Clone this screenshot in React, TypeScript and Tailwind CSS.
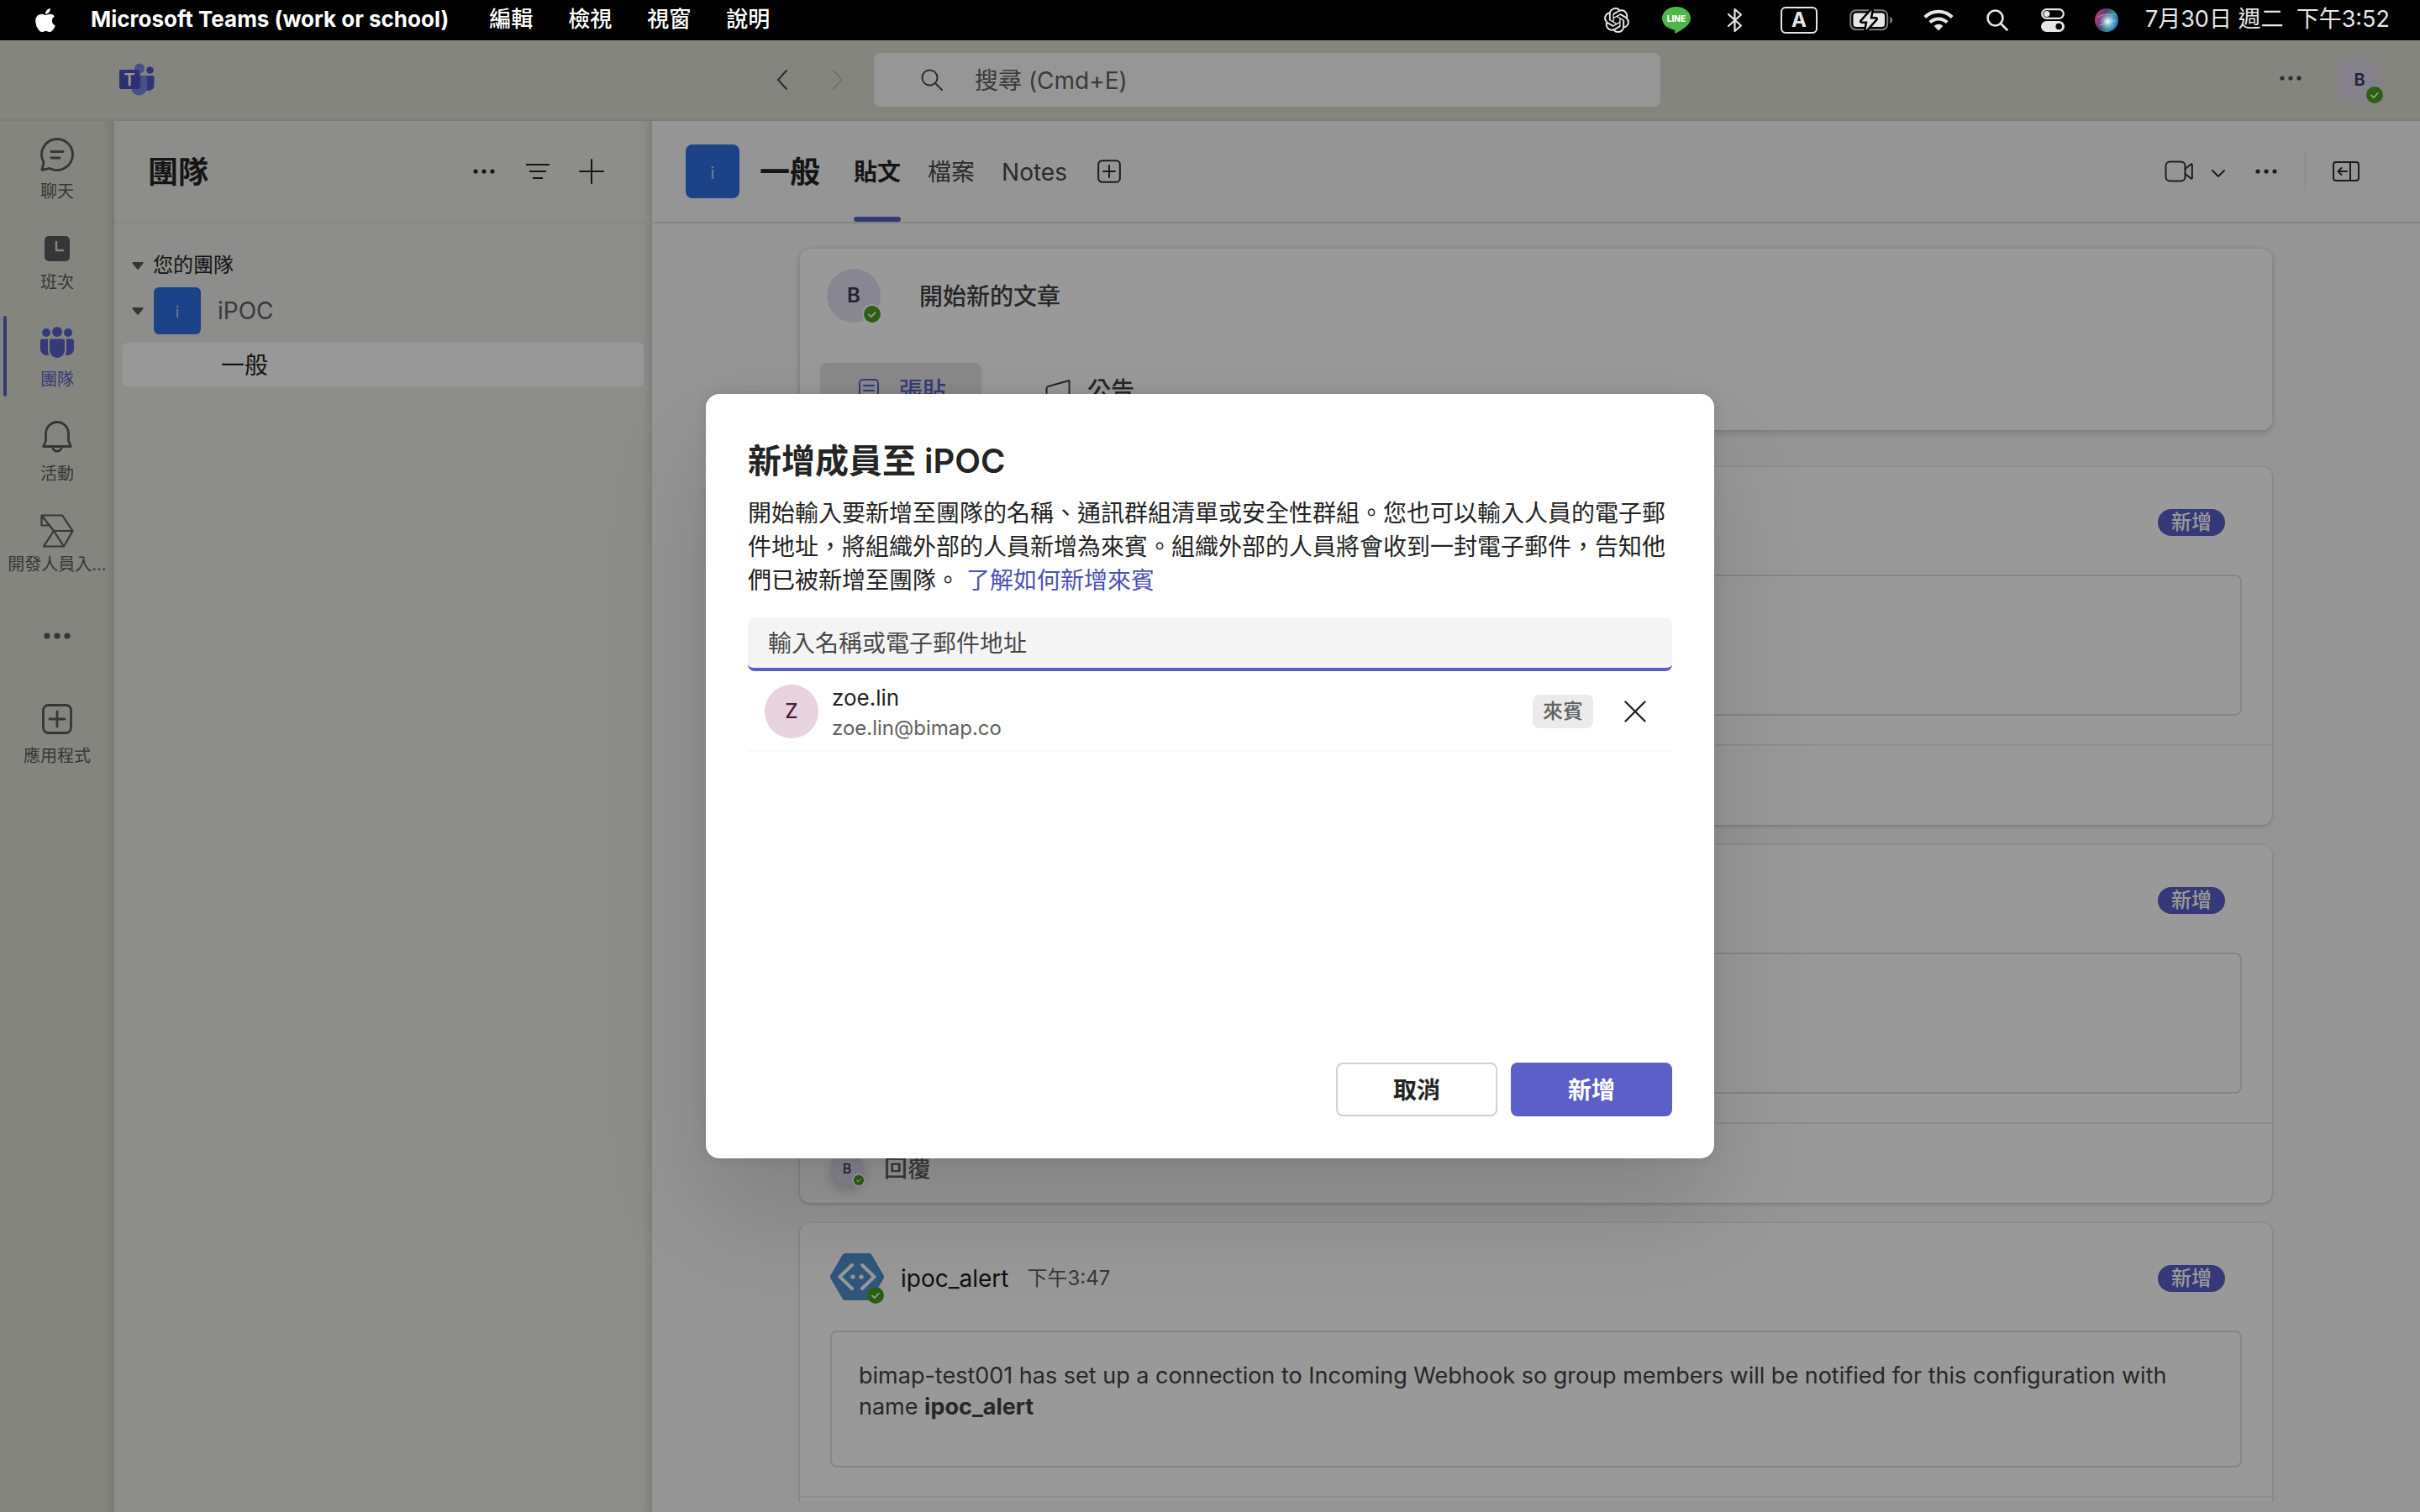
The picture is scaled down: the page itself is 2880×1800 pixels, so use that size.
import type { ReactNode } from "react";
import { FaApple } from "react-icons/fa";
import { SiOpenai } from "react-icons/si";

const svgBase = { fill: "none", stroke: "currentColor", strokeLinecap: "round", strokeLinejoin: "round" } as const;

function Dots({ large = false }: { large?: boolean }) {
  return large ? (
    <svg width="32" height="8" viewBox="0 0 32 8" fill="currentColor" aria-hidden="true">
      <circle cx="4" cy="4" r="3.6" />
      <circle cx="16" cy="4" r="3.6" />
      <circle cx="28" cy="4" r="3.6" />
    </svg>
  ) : (
    <svg width="26" height="6" viewBox="0 0 26 6" fill="currentColor" aria-hidden="true">
      <circle cx="3" cy="3" r="2.6" />
      <circle cx="13" cy="3" r="2.6" />
      <circle cx="23" cy="3" r="2.6" />
    </svg>
  );
}

function TeamsLogo() {
  return (
    <svg width="42" height="40" viewBox="0 0 42 40" aria-label="Microsoft Teams" role="img">
      <circle cx="36.5" cy="8.5" r="4.3" fill="#5059c9" />
      <path d="M28 15h11.5a2 2 0 0 1 2 2v9a6.5 6.5 0 0 1-13 1z" fill="#5059c9" />
      <circle cx="24" cy="6.4" r="6" fill="#7b83eb" />
      <path d="M14 15h17.5a1.6 1.6 0 0 1 1.6 1.6V29a9.5 9.5 0 0 1-19 0z" fill="#7b83eb" />
      <path d="M14 12h11.5v15a3 3 0 0 1-3 3H14z" fill="#000" opacity=".25" />
      <rect x="0" y="8" width="24" height="23" rx="2" fill="#4b53bc" />
      <text x="12" y="27" textAnchor="middle" fontFamily="Inter, sans-serif" fontWeight="600" fontSize="20" fill="#fff">T</text>
    </svg>
  );
}

function Presence({ size, ring }: { size: "sm" | "md"; ring?: string }) {
  return (
    <span className={`absolute bottom-0 right-0 rounded-full ${ring ?? ""} ${size === "sm" ? "size-3" : "size-5"}`}>
      <svg viewBox="0 0 20 20" className="size-full" aria-hidden="true">
        <circle cx="10" cy="10" r="10" fill="#46a01c" />
        <path d="M6 10.3l2.8 2.8 5-5.2" {...svgBase} stroke="#fff" strokeWidth="1.8" />
      </svg>
    </span>
  );
}

function PlusBox({ size, stroke }: { size: number; stroke: number }) {
  return (
    <svg width={size} height={size} viewBox="0 0 36 36" {...svgBase} strokeWidth={stroke} aria-hidden="true">
      <rect x="1.5" y="1.5" width="33" height="33" rx="6" />
      <path d="M18 9v18M9 18h18" />
    </svg>
  );
}

function ChatIcon() {
  return (
    <svg width="40" height="40" viewBox="0 0 40 40" {...svgBase} strokeWidth="2.8" aria-hidden="true">
      <path d="M20 1.5a18.5 18.5 0 1 1-8.6 34.9L2 38.3l2-9.2A18.5 18.5 0 0 1 20 1.5z" />
      <path d="M13 16.5h14M13 24h10" />
    </svg>
  );
}

function ShiftsIcon() {
  return (
    <svg width="30" height="30" viewBox="0 0 30 30" aria-hidden="true">
      <rect width="30" height="30" rx="5" fill="currentColor" />
      <path d="M14 7v10h8" fill="none" stroke="#dcded4" strokeWidth="2.4" strokeLinecap="round" />
    </svg>
  );
}

function PeopleIcon() {
  return (
    <svg width="40" height="38" viewBox="0 0 40 38" fill="currentColor" aria-hidden="true">
      <circle cx="20" cy="6" r="6" />
      <circle cx="7" cy="7" r="5" />
      <circle cx="33" cy="7" r="5" />
      <path d="M11 17a2.5 2.5 0 0 1 2.500-2.500h13A2.500 2.500 0 0 1 29 17v11a9 9 0 0 1-18 0z" />
      <path d="M9.500 14.500H2.500A2.500 2.500 0 0 0 0 17v9.500a7.500 7.500 0 0 0 10.300 6.900A11 11 0 0 1 9 28V17c0-.9.2-1.800.5-2.500zM30.500 14.500h7A2.500 2.500 0 0 1 40 17v9.500a7.500 7.500 0 0 1-10.300 6.900A11 11 0 0 0 31 28V17c0-.9-.2-1.800-.5-2.500z" />
    </svg>
  );
}

function BellIcon() {
  return (
    <svg width="36" height="38" viewBox="0 0 36 38" {...svgBase} strokeWidth="2.800" aria-hidden="true">
      <path d="M18 1.500A13.500 13.500 0 0 0 4.500 15v8.500L1.700 30.500h32.600l-2.800-7V15A13.500 13.500 0 0 0 18 1.500z" />
      <path d="M12.800 31a5.200 5.200 0 0 0 10.400 0" />
    </svg>
  );
}

function DeveloperIcon() {
  return (
    <svg width="40" height="40" viewBox="0 0 40 40" {...svgBase} strokeWidth="2.200" aria-hidden="true">
      <path d="M1.500 1.500H26L38.500 20 28 38.500H4L16 20 1.500 1.500zM1.500 1.500V13.500H11M16 20h22.500M16 20l12 18.500" />
    </svg>
  );
}

function RailItem({ icon, label, active, app }: { icon: ReactNode; label: string; active?: boolean; app?: boolean }) {
  return (
    <button
      className={`relative flex h-[112px] w-full flex-col items-center pt-5 text-xl leading-6 ${active ? "text-[#5b5fc7]" : "text-[#5c5c5c]"}`}
    >
      {active && <span className="absolute bottom-2 left-1 top-2 w-1 rounded-full bg-[#5b5fc7]" />}
      <span className={`flex h-10 items-center ${active ? "" : "text-[#5a5a5a]"}`}>{icon}</span>
      <span className={`whitespace-nowrap text-center ${app ? "mt-2" : "mt-3"}`}>{label}</span>
    </button>
  );
}

function MenuBar() {
  return (
    <header className="flex h-12 shrink-0 items-center bg-black pl-[38px] pr-9 text-[26px] leading-8 text-white">
      <FaApple className="mr-[38px] size-8 shrink-0" />
      <nav className="flex items-center gap-[42px] pb-0.5 font-medium">
        <span className="mr-1.5 font-bold">Microsoft Teams (work or school)</span>
        <span>編輯</span>
        <span>檢視</span>
        <span>視窗</span>
        <span>說明</span>
      </nav>
      <div className="ml-auto flex items-center text-[#e6e6e6]">
        <SiOpenai className="mr-[38px] size-[30px]" />
        <svg width="36" height="34" viewBox="0 0 36 34" className="mr-[42px]" aria-label="LINE">
          <path d="M18 1C8.500 1 1 7.200 1 14.800c0 6.800 6 12.400 14.200 13.600 1.200.3 1.300 1.500 1 4.600C24 29 35 23.500 35 14.800 35 7.200 27.500 1 18 1z" fill="#4db749" />
          <text x="18" y="19" textAnchor="middle" fontFamily="Inter, sans-serif" fontWeight="800" fontSize="10" fill="#fff">LINE</text>
        </svg>
        <svg width="20" height="30" viewBox="0 0 20 30" className="mr-[44px]" {...svgBase} strokeWidth="2.200" aria-label="Bluetooth">
          <path d="M2 8l15 13.500L9.500 28V2L17 8.500 2 22" />
        </svg>
        <span className="mr-[38px] flex h-8 w-11 items-center justify-center rounded-md border-2 border-[#e6e6e6] text-2xl font-bold">A</span>
        <svg width="52" height="26" viewBox="0 0 52 26" className="mr-[36px]" aria-label="Battery charging">
          <rect x="1.200" y="1.200" width="44" height="23" rx="6.500" fill="none" stroke="#7a7a7a" strokeWidth="2" />
          <rect x="4.500" y="4.500" width="37.500" height="16.500" rx="3.500" fill="#e6e6e6" />
          <path d="M48.200 9v8c2-.6 3-2.200 3-4s-1-3.400-3-4z" fill="#7a7a7a" />
          <path d="M26.500 1L14.500 14.500h7L19.500 25l12-13.500h-7z" fill="#e6e6e6" stroke="#000" strokeWidth="5" strokeLinejoin="round" paintOrder="stroke" />
        </svg>
        <svg width="36" height="26" viewBox="0 0 36 26" className="mr-[38px]" fill="none" stroke="currentColor" strokeWidth="4" aria-label="Wi-Fi">
          <path d="M1.800 9.500a23 23 0 0 1 32.400 0M7.800 15.700a14.500 14.500 0 0 1 20.400 0" />
          <path d="M18 25.500l-5.300-5.600a7.500 7.500 0 0 1 10.600 0z" fill="currentColor" stroke="none" />
        </svg>
        <svg width="28" height="28" viewBox="0 0 28 28" className="mr-[38px]" {...svgBase} strokeWidth="2.600" aria-label="Search">
          <circle cx="11.500" cy="11.500" r="9" />
          <path d="M18.500 18.500l7 7" />
        </svg>
        <svg width="28" height="28" viewBox="0 0 28 28" className="mr-[36px]" aria-label="Control Center">
          <rect x="1.200" y="1.200" width="25.600" height="10.600" rx="5.300" fill="none" stroke="#e6e6e6" strokeWidth="2.200" />
          <circle cx="6.800" cy="6.500" r="3.600" fill="#e6e6e6" />
          <rect x="0" y="15" width="28" height="13" rx="6.500" fill="#e6e6e6" />
          <circle cx="21.200" cy="21.500" r="3.800" fill="#000" />
        </svg>
        <svg width="28" height="28" viewBox="0 0 28 28" className="mr-8" aria-label="Siri">
          <defs>
            <linearGradient id="siri" x1="0" y1="0.300" x2="1" y2="0.700">
              <stop offset="0" stopColor="#c93a6b" />
              <stop offset="0.350" stopColor="#5b3a78" />
              <stop offset="0.650" stopColor="#2f8f93" />
              <stop offset="1" stopColor="#2c6fd0" />
            </linearGradient>
            <radialGradient id="siriGlow" cx="0.550" cy="0.550" r="0.400">
              <stop offset="0" stopColor="#fff" />
              <stop offset="1" stopColor="#9fd8ff" stopOpacity="0" />
            </radialGradient>
          </defs>
          <circle cx="14" cy="14" r="14" fill="url(#siri)" />
          <circle cx="14" cy="14" r="14" fill="url(#siriGlow)" />
          <path d="M3 11c6-5 12-3 22-4M5 20c6 0 10-6 20-5" stroke="#bfe9e8" strokeWidth="1" opacity=".5" fill="none" />
        </svg>
        <time className="whitespace-pre pb-0.5 text-[27px]">7月30日 週二  下午3:52</time>
      </div>
    </header>
  );
}

function TitleBar() {
  return (
    <div className="flex h-24 shrink-0 items-center border-b-2 border-[#d0d1c8] bg-[#dcded4] pr-[44px] text-[#4a4a4a]">
      <div className="flex w-[1040px] items-center justify-between pl-[142px] pr-[10px]">
        <TeamsLogo />
        <div className="flex">
          <button aria-label="上一頁" className="flex h-16 w-[66px] items-center justify-center">
            <svg width="14" height="24" viewBox="0 0 14 24" {...svgBase} strokeWidth="2"><path d="M12 1L2 12l10 11" /></svg>
          </button>
          <button aria-label="下一頁" disabled className="flex h-16 w-[66px] items-center justify-center text-[#bfc0b8]">
            <svg width="14" height="24" viewBox="0 0 14 24" {...svgBase} strokeWidth="2"><path d="M2 1l10 11L2 23" /></svg>
          </button>
        </div>
      </div>
      <label className="flex h-16 w-[936px] items-center rounded-lg bg-[#fafafa] pl-[56px]">
        <svg width="26" height="26" viewBox="0 0 26 26" {...svgBase} strokeWidth="2" className="mr-[38px] shrink-0" aria-hidden="true">
          <circle cx="10.500" cy="10.500" r="9" />
          <path d="M17 17l8 8" />
        </svg>
        <input
          type="search"
          aria-label="搜尋"
          placeholder="搜尋 (Cmd+E)"
          className="h-full flex-1 bg-transparent pt-0.5 text-[28px] outline-none placeholder:text-[#616161]"
        />
      </label>
      <div className="ml-auto flex items-center gap-[22px]">
        <button aria-label="設定及其他" className="flex size-16 items-center justify-center pb-1">
          <Dots />
        </button>
        <button aria-label="個人檔案" className="relative flex size-14 items-center justify-center rounded-full bg-[#dcd7e6] text-xl font-semibold text-[#3f3a5c]">
          B
          <Presence size="md" />
        </button>
      </div>
    </div>
  );
}

function Rail() {
  return (
    <nav className="w-[136px] shrink-0 bg-[#dcded4] shadow-[inset_-16px_0_12px_-12px_rgba(0,0,0,0.12)]">
      <RailItem icon={<ChatIcon />} label="聊天" />
      <RailItem icon={<ShiftsIcon />} label="班次" app />
      <RailItem icon={<PeopleIcon />} label="團隊" active />
      <RailItem icon={<BellIcon />} label="活動" />
      <RailItem icon={<DeveloperIcon />} label="開發人員入..." app />
      <button aria-label="檢視更多應用程式" className="mb-2 flex h-[104px] w-full items-center justify-center pt-0.5 text-[#5a5a5a]">
        <Dots large />
      </button>
      <RailItem icon={<PlusBox size={36} stroke={2.8} />} label="應用程式" />
    </nav>
  );
}

function Caret() {
  return (
    <svg width="14" height="9" viewBox="0 0 14 9" fill="#5a5a5a" aria-hidden="true">
      <path d="M1.500 0h11a1 1 0 0 1 .8 1.700L8 8.200a1.300 1.300 0 0 1-2 0L.7 1.700A1 1 0 0 1 1.500 0z" />
    </svg>
  );
}

function TeamPanel() {
  return (
    <aside className="flex w-[640px] shrink-0 flex-col bg-[#ebebe8] shadow-[inset_-16px_0_12px_-12px_rgba(0,0,0,0.12)]">
      <div className="flex h-[122px] items-center border-b-2 border-[#dededb] px-10 text-[#242424]">
        <h2 className="mr-auto pt-0.5 text-4xl font-bold">團隊</h2>
        <button aria-label="更多選項" className="flex size-16 items-center justify-center"><Dots /></button>
        <button aria-label="篩選" className="flex size-16 items-center justify-center">
          <svg width="28" height="18" viewBox="0 0 28 18" {...svgBase} strokeLinecap="butt" strokeWidth="2"><path d="M0 1h28M4 9h20M8 17h12" /></svg>
        </button>
        <button aria-label="建立或加入團隊" className="flex size-16 items-center justify-center">
          <svg width="30" height="30" viewBox="0 0 30 30" {...svgBase} strokeWidth="2"><path d="M15 1v28M1 15h28" /></svg>
        </button>
      </div>
      <div className="px-[10px] pt-8">
        <button className="flex h-9 items-center gap-[11px] pl-[11px] text-2xl text-[#242424]">
          <Caret />
          您的團隊
        </button>
        <button className="mt-2 flex h-14 items-center pl-[11px] text-[28px] text-[#616161]">
          <Caret />
          <span className="ml-3 mr-5 flex size-14 items-center justify-center rounded-md bg-[#2f71e1] pt-1 text-lg text-white/70">i</span>
          iPOC
        </button>
        <button className="mt-2.5 flex h-[52px] w-full items-center rounded-md bg-[#fdfdfd] pl-[117px] pt-0.5 text-[28px] text-[#242424]">一般</button>
      </div>
    </aside>
  );
}

function ChannelHeader() {
  const tab = "relative flex h-full items-center px-4 pt-0.5 text-[28px] text-[#484848]";
  return (
    <div className="flex h-[122px] shrink-0 items-center border-b-2 border-[#dedede] pl-10 pr-[72px] text-[#303030]">
      <span className="flex size-16 items-center justify-center rounded-lg bg-[#2f71e1] pt-1 text-xl text-white/70">i</span>
      <h1 className="ml-6 mr-6 pt-0.5 text-4xl font-bold text-[#242424]">一般</h1>
      <div role="tablist" className="flex h-full">
        <button role="tab" aria-selected="true" className="relative flex h-full items-center px-4 pt-0.5 text-[28px] font-bold text-[#242424]">
          貼文
          <span className="absolute inset-x-4 bottom-0 h-1.5 rounded-full bg-[#5b5fc7]" />
        </button>
        <button role="tab" className={tab}>檔案</button>
        <button role="tab" className={tab}>Notes</button>
      </div>
      <button aria-label="新增索引標籤" className="ml-5"><PlusBox size={28} stroke={2.6} /></button>
      <div className="ml-auto flex items-center">
        <button aria-label="立即開會">
          <svg width="34" height="26" viewBox="0 0 34 26" {...svgBase} strokeWidth="2">
            <rect x="1.500" y="1.500" width="23" height="23" rx="5" />
            <path d="M24.500 10l7-5.500a.8.800 0 0 1 1.300.6v15.800a.8.800 0 0 1-1.300.6l-7-5.500" />
          </svg>
        </button>
        <button aria-label="會議選項" className="ml-[22px] mt-1">
          <svg width="16" height="9" viewBox="0 0 16 9" {...svgBase} strokeWidth="2"><path d="M1 1l7 7 7-7" /></svg>
        </button>
        <button aria-label="更多選項" className="ml-9"><Dots /></button>
        <span className="mx-8 h-12 w-0.5 bg-[#efefef]" />
        <button aria-label="開啟頻道詳細資料">
          <svg width="32" height="24" viewBox="0 0 32 24" {...svgBase} strokeWidth="2">
            <rect x="1" y="1" width="30" height="22" rx="3" />
            <path d="M21 1v22M17 12H7M10.500 8L6.500 12l4 4" />
          </svg>
        </button>
      </div>
    </div>
  );
}

function Composer() {
  return (
    <section className="flex h-[216px] flex-col justify-between rounded-xl bg-white p-6 pb-4 shadow-[0_4px_8px_rgba(0,0,0,0.14),0_0_4px_rgba(0,0,0,0.12)]">
      <div className="flex items-center pl-2">
        <span className="relative flex size-16 items-center justify-center rounded-full bg-[#e3dff0] text-2xl font-semibold text-[#3f3a5c]">
          B
          <Presence size="md" ring="ring-2 ring-white" />
        </span>
        <button className="ml-[46px] pt-0.5 text-[28px] font-medium text-[#424242]">開始新的文章</button>
      </div>
      <div className="flex h-16 text-[28px] font-medium">
        <button className="flex w-48 items-center justify-center gap-6 rounded-lg bg-[#e4e4e4] pl-1 pt-0.5 text-[#5b5fc7]">
          <svg width="24" height="28" viewBox="0 0 24 28" {...svgBase} strokeWidth="2" aria-hidden="true">
            <rect x="1" y="1" width="22" height="26" rx="4" />
            <path d="M6 8h12M6 14h12M6 20h7" />
          </svg>
          張貼
        </button>
        <button className="ml-[76px] flex items-center gap-5 pt-0.5 text-[#424242]">
          <svg width="30" height="28" viewBox="0 0 30 28" {...svgBase} strokeWidth="2" aria-hidden="true">
            <path d="M28.500 2v23L8 20H4a2.500 2.500 0 0 1-2.500-2.500v-6A3 3 0 0 1 3.500 9z" />
            <path d="M8 20a5 5 0 0 0 9.500 2.500" />
          </svg>
          公告
        </button>
      </div>
    </section>
  );
}

function BotAvatar() {
  return (
    <span className="relative flex size-16 items-center">
      <svg width="64" height="56" viewBox="0 0 64 56" aria-hidden="true">
        <path d="M18 0h28a4 4 0 0 1 3.500 2l14 24a4 4 0 0 1 0 4l-14 24a4 4 0 0 1-3.500 2H18a4 4 0 0 1-3.500-2L.5 30a4 4 0 0 1 0-4l14-24A4 4 0 0 1 18 0z" fill="#5292d0" />
        <path d="M26 14L11.500 28 26 42M38 14l14.500 14L38 42" fill="none" stroke="#fff" strokeWidth="4" strokeLinecap="round" strokeLinejoin="round" />
        <circle cx="27" cy="28" r="2.600" fill="#fff" />
        <circle cx="37" cy="28" r="2.600" fill="#fff" />
      </svg>
      <Presence size="md" />
    </span>
  );
}

function ReplyRow() {
  return (
    <>
      <span className="relative flex size-10 items-center justify-center rounded-full bg-[#e3dff0] text-base font-medium text-[#3f3a5c] shadow-[0_6px_14px_rgba(0,0,0,0.2)]">
        B
        <Presence size="sm" ring="ring-2 ring-white" />
      </span>
      <button className="ml-6 text-[28px] font-medium text-[#616161]">回覆</button>
    </>
  );
}

function Post({ author, time, children }: { author?: string; time?: string; children?: ReactNode }) {
  return (
    <article className="mt-6 rounded-xl bg-white shadow-[0_2px_4px_rgba(0,0,0,0.14),0_0_4px_rgba(0,0,0,0.12)]">
      <div className="flex h-32 items-center pl-9 pr-14">
        <BotAvatar />
        {author && <span className="ml-5 pt-1 text-[28px] text-[#1c1c1c]">{author}</span>}
        {time && <time className="ml-[22px] pt-1 text-2xl text-[#616161]">{time}</time>}
        <span className="ml-auto mt-1 flex h-8 w-20 items-center justify-center rounded-full bg-[#5b5fc7] text-2xl font-medium text-white">新增</span>
      </div>
      <div className={`mx-9 mb-[34px] rounded-lg border-2 border-[#dedede] px-8 pb-8 pt-[33px] text-[27px] leading-[37px] text-[#424242] ${children ? "min-h-[163px]" : "min-h-[168px]"}`}>
        {children}
      </div>
      <div className="flex h-24 items-center border-t-2 border-[#ebebeb] pl-9 pt-3">{!children && <ReplyRow />}</div>
    </article>
  );
}

function AddMemberDialog() {
  return (
    <div
      role="dialog"
      aria-modal="true"
      aria-labelledby="dialog-title"
      className="flex h-[910px] w-[1200px] flex-col rounded-2xl bg-white p-[50px] pt-[52px] text-[#242424] shadow-[0_0_16px_rgba(0,0,0,0.1),0_64px_128px_rgba(0,0,0,0.14)]"
    >
      <h2 id="dialog-title" className="mb-3.5 text-[40px] font-semibold leading-[56px]">新增成員至 iPOC</h2>
      <p className="text-[28px] leading-10">
        開始輸入要新增至團隊的名稱、通訊群組清單或安全性群組。您也可以輸入人員的電子郵件地址，將組織外部的人員新增為來賓。組織外部的人員將會收到一封電子郵件，告知他們已被新增至團隊。{" "}
        <a href="#guests" className="text-[#4f52b2]">了解如何新增來賓</a>
      </p>
      <input
        type="text"
        aria-label="輸入名稱或電子郵件地址"
        placeholder="輸入名稱或電子郵件地址"
        className="mt-6 h-16 w-full shrink-0 rounded-lg border-b-4 border-[#5b5fc7] bg-[#f4f4f4] px-6 pt-0.5 text-[28px] outline-none placeholder:text-[#484848]"
      />
      <ul>
        <li className="flex h-24 items-center border-b-2 border-[#f8f8f8] px-5 pt-0.5">
          <span className="flex size-16 items-center justify-center rounded-full bg-[#e6d3de] text-2xl font-medium text-[#4e1a3c]">Z</span>
          <div className="ml-4 flex flex-col gap-1 pt-1">
            <span className="text-[26px] leading-8">zoe.lin</span>
            <span className="text-2xl leading-8 text-[#616161]">zoe.lin@bimap.co</span>
          </div>
          <span className="ml-auto flex h-10 w-[72px] items-center justify-center rounded-lg bg-[#ebebeb] text-2xl font-medium text-[#616161]">來賓</span>
          <button aria-label="移除 zoe.lin" className="ml-[37px] mr-[11px] text-[#242424]">
            <svg width="26" height="26" viewBox="0 0 26 26" {...svgBase} strokeWidth="2.400"><path d="M1.500 1.500l23 23M24.500 1.500l-23 23" /></svg>
          </button>
        </li>
      </ul>
      <div className="mt-auto flex justify-end gap-4 text-[28px] font-semibold">
        <button className="h-16 w-48 rounded-lg border-2 border-[#d1d1d1] pt-0.5">取消</button>
        <button className="h-16 w-48 rounded-lg bg-[#5b5fc7] pt-0.5 text-white">新增</button>
      </div>
    </div>
  );
}

export default function App() {
  return (
    <div lang="zh-Hant" className="flex h-screen flex-col overflow-hidden font-['Inter','Noto_Sans_CJK_TC',sans-serif]">
      <MenuBar />
      <div className="relative flex min-h-0 flex-1 flex-col">
        <TitleBar />
        <div className="flex min-h-0 flex-1">
          <Rail />
          <TeamPanel />
          <main className="flex min-w-0 flex-1 flex-col bg-[#f9f9f9] pb-3">
            <ChannelHeader />
            <div className="min-h-0 flex-1 overflow-hidden px-44 pt-[30px]">
              <Composer />
              <div className="pt-5">
                <Post />
                <Post />
                <Post author="ipoc_alert" time="下午3:47">
                  bimap-test001 has set up a connection to Incoming Webhook so group members will be notified for this configuration with name <b>ipoc_alert</b>
                </Post>
              </div>
            </div>
          </main>
        </div>
        <div className="absolute inset-0 flex items-center justify-center bg-black/40">
          <AddMemberDialog />
        </div>
      </div>
    </div>
  );
}
